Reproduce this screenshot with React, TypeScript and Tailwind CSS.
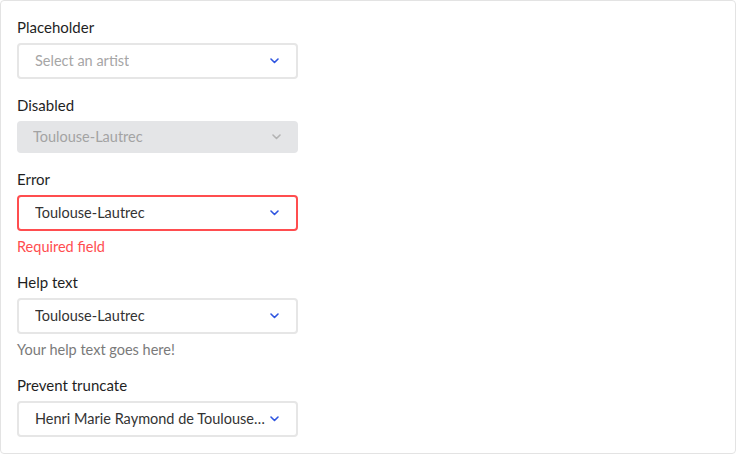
import React from 'react';

const Chevron = ({ disabled }: { disabled?: boolean }) => (
  <svg width="9" height="6" viewBox="0 0 9 6" fill="none" className="shrink-0">
    <path
      d="M1 1l3.5 3.5L8 1"
      stroke={disabled ? '#b3b3b3' : '#2f55e0'}
      strokeWidth="1.6"
      strokeLinecap="round"
      strokeLinejoin="round"
    />
  </svg>
);

type FieldProps = {
  label: string;
  value?: string;
  placeholder?: string;
  disabled?: boolean;
  error?: string;
  help?: string;
};

const SelectField = ({ label, value, placeholder, disabled, error, help }: FieldProps) => {
  const boxClass = disabled
    ? 'h-8 bg-[#e4e5e7] border-0 text-[#a3a3a3]'
    : error
    ? 'h-9 bg-white border-2 border-[#ff4d4f] text-[#333333]'
    : 'h-9 bg-white border-2 border-[#e6e6e6] text-[#333333]';

  return (
    <div className="flex flex-col gap-[6px]">
      <label className="text-[15px] leading-5 text-[#1f1f1f]">{label}</label>
      <button
        type="button"
        disabled={disabled}
        className={`w-[281px] rounded-[4px] flex items-center justify-between gap-1 pl-4 pr-[17px] text-left ${boxClass}`}
      >
        <span className={`truncate text-[14.5px] leading-5 ${value ? '' : 'text-[#a6a6a6]'}`}>
          {value || placeholder}
        </span>
        <Chevron disabled={disabled} />
      </button>
      {error && <p className="text-[14.5px] leading-5 text-[#ff4d4f] -mb-px">{error}</p>}
      {help && <p className="text-[14.5px] leading-5 text-[#7a7a7a] -mb-px">{help}</p>}
    </div>
  );
};

export default function App() {
  return (
    <div className="w-[736px] h-[454px] bg-white" style={{ fontFamily: 'Lato, "Open Sans", sans-serif' }}>
      <div className="h-full border border-[#e3e3e3] rounded-[4px] p-4 flex flex-col gap-4">
        <SelectField label="Placeholder" placeholder="Select an artist" />
        <SelectField label="Disabled" value="Toulouse-Lautrec" disabled />
        <SelectField label="Error" value="Toulouse-Lautrec" error="Required field" />
        <SelectField label="Help text" value="Toulouse-Lautrec" help="Your help text goes here!" />
        <SelectField label="Prevent truncate" value="Henri Marie Raymond de Toulouse-Lautrec-Monfa" />
      </div>
    </div>
  );
}
